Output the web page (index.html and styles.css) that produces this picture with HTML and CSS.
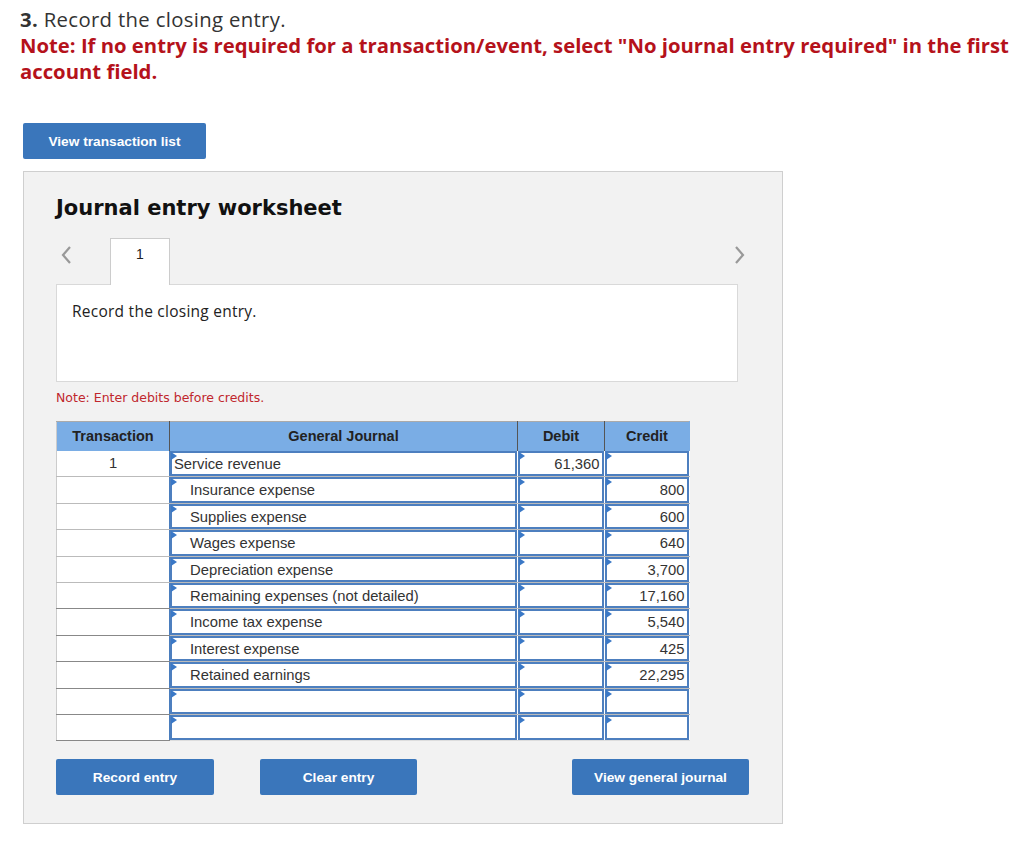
FILE: index.html
```html
<!DOCTYPE html>
<html lang="en">
<head>
    <meta charset="utf-8">
    <title>Record the closing entry</title>
    <link rel="stylesheet" href="styles.css">
</head>
<body>
    <div class="question">
        <p class="qTitle"><b>3.</b> Record the closing entry.</p>
        <p class="qNote">Note: If no entry is required for a transaction/event, select "No journal entry required" in the first account field.</p>
    </div>

    <button class="btn btnList">View transaction list</button>

    <div class="panel">
        <h2 class="panelTitle">Journal entry worksheet</h2>

        <div class="tabs">
            <span class="arrow">
                <svg width="12" height="20" viewBox="0 0 12 20"><path d="M10 2 L3 10 L10 18" fill="none" stroke="#999" stroke-width="2.2"/></svg>
            </span>
            <span class="tab">1</span>
            <span class="arrow arrowRight">
                <svg width="12" height="20" viewBox="0 0 12 20"><path d="M2 2 L9 10 L2 18" fill="none" stroke="#999" stroke-width="2.2"/></svg>
            </span>
        </div>

        <div class="desc">Record the closing entry.</div>

        <p class="hint">Note: Enter debits before credits.</p>

        <table class="journal">
            <thead>
                <tr>
                    <th class="colTx">Transaction</th>
                    <th class="colAcc">General Journal</th>
                    <th class="colDr">Debit</th>
                    <th class="colCr">Credit</th>
                </tr>
            </thead>
            <tbody>
                <tr>
                    <td class="tx">1</td>
                    <td><div class="cell">Service revenue</div></td>
                    <td><div class="cell num">61,360</div></td>
                    <td><div class="cell num"></div></td>
                </tr>
                <tr>
                    <td class="tx"></td>
                    <td><div class="cell indent">Insurance expense</div></td>
                    <td><div class="cell num"></div></td>
                    <td><div class="cell num">800</div></td>
                </tr>
                <tr>
                    <td class="tx"></td>
                    <td><div class="cell indent">Supplies expense</div></td>
                    <td><div class="cell num"></div></td>
                    <td><div class="cell num">600</div></td>
                </tr>
                <tr>
                    <td class="tx"></td>
                    <td><div class="cell indent">Wages expense</div></td>
                    <td><div class="cell num"></div></td>
                    <td><div class="cell num">640</div></td>
                </tr>
                <tr>
                    <td class="tx"></td>
                    <td><div class="cell indent">Depreciation expense</div></td>
                    <td><div class="cell num"></div></td>
                    <td><div class="cell num">3,700</div></td>
                </tr>
                <tr>
                    <td class="tx"></td>
                    <td><div class="cell indent">Remaining expenses (not detailed)</div></td>
                    <td><div class="cell num"></div></td>
                    <td><div class="cell num">17,160</div></td>
                </tr>
                <tr>
                    <td class="tx"></td>
                    <td><div class="cell indent">Income tax expense</div></td>
                    <td><div class="cell num"></div></td>
                    <td><div class="cell num">5,540</div></td>
                </tr>
                <tr>
                    <td class="tx"></td>
                    <td><div class="cell indent">Interest expense</div></td>
                    <td><div class="cell num"></div></td>
                    <td><div class="cell num">425</div></td>
                </tr>
                <tr>
                    <td class="tx"></td>
                    <td><div class="cell indent">Retained earnings</div></td>
                    <td><div class="cell num"></div></td>
                    <td><div class="cell num">22,295</div></td>
                </tr>
                <tr>
                    <td class="tx"></td>
                    <td><div class="cell"></div></td>
                    <td><div class="cell num"></div></td>
                    <td><div class="cell num"></div></td>
                </tr>
                <tr>
                    <td class="tx"></td>
                    <td><div class="cell"></div></td>
                    <td><div class="cell num"></div></td>
                    <td><div class="cell num"></div></td>
                </tr>
            </tbody>
        </table>

        <div class="actions">
            <button class="btn btnRecord">Record entry</button>
            <button class="btn btnClear">Clear entry</button>
            <button class="btn btnView">View general journal</button>
        </div>
    </div>
</body>
</html>
```

FILE: styles.css
```css
*{margin:0; padding:0; box-sizing:border-box;}
body{
    margin:0;
    padding:6px 12px 20px 20px;
    background:#fff;
    color:#333;
    font-family:"Open Sans", Lato, sans-serif;
}
.question{
    width:996px;
}
.qTitle{
    font-size:20.3px;
    letter-spacing:0.35px;
    line-height:26px;
    color:#333;
}
.qTitle b{font-weight:700;}
.qNote{
    font-size:20.3px;
    line-height:26px;
    font-weight:700;
    color:#b5121b;
}

.btn{
    display:block;
    height:36px;
    border:none;
    border-radius:2px;
    background:#3a76bb;
    color:#fff;
    font:bold 13.7px "Liberation Sans", Arial, sans-serif;
    cursor:pointer;
}
.btnList{
    width:183px;
    margin:39px 0 0 3px;
}

.panel{
    width:760px;
    margin:12px 0 0 3px;
    padding:23px 32px 28px 32px;
    background:#f2f2f2;
    border:1px solid #cfcfcf;
}
.panelTitle{
    font:bold 21px "DejaVu Sans", Verdana, sans-serif;
    color:#111;
    line-height:26px;
}
.tabs{
    display:flex;
    align-items:flex-start;
    margin-top:17px;
    width:686px;
}
.arrow{
    width:54px;
    padding:7px 0 0 4px;
}
.arrowRight{
    margin-left:auto;
    margin-right:-4px;
    width:auto;
    padding:7px 0 0 0;
}
.tab{
    width:60px;
    height:47px;
    margin-bottom:-1px;
    background:#fff;
    border:1px solid #ccc;
    border-bottom:none;
    text-align:center;
    padding-top:7px;
    font:14px "Liberation Sans", Arial, sans-serif;
    color:#222;
    position:relative;
    z-index:1;
}
.desc{
    width:682px;
    height:98px;
    background:#fff;
    border:1px solid #d9d9d9;
    padding:15px 15px;
    font-size:15.5px;
    letter-spacing:0.25px;
    color:#222;
}
.hint{
    margin-top:8px;
    font:12.5px "DejaVu Sans", Verdana, sans-serif;
    color:#c0272d;
    line-height:16px;
}

.journal{
    margin-top:15px;
    border-collapse:collapse;
    font:14.8px "Liberation Sans", Arial, sans-serif;
    background:#fff;
    border-left:1px solid #ccc;
}
.journal th{
    height:29px;
    background:#7aade5;
    color:#222;
    font-weight:bold;
    font-size:14.5px;
    border-top:1px solid #aaa;
    border-right:1px solid #555;
    text-align:center;
}
.journal th:last-child{border-right:1px solid #7aade5;}
.colTx{width:113px;}
.colAcc{width:348px;}
.colDr{width:87px;}
.colCr{width:85px;}
.journal td{
    height:26.4px;
    padding:0;
    border-bottom:1px solid #bbb;
}
.journal tbody tr:nth-child(n+6) td.tx{border-bottom-color:#888;}
.journal td.tx{
    text-align:center;
    color:#333;
    border-right:1px solid #4a7dbd;
}
.journal tbody tr:last-child td{border-bottom:1px solid #ddd;}
.cell{
    position:relative;
    height:25.4px;
    margin:0 1px 0 0;
    border:2px solid #4d7fbf;
    background:#fff;
    padding:2px 2px 0 2px;
    color:#333;
    line-height:19px;
    white-space:nowrap;
}
.cell::before{
    content:"";
    position:absolute;
    top:-1px;
    left:-1px;
    border-top:4px solid transparent;
    border-bottom:4px solid transparent;
    border-left:6px solid #3a78c6;
}
.cell.indent{padding-left:18px;}
.cell.num{text-align:right;}

.actions{
    display:flex;
    margin-top:18px;
    width:693px;
}
.btnRecord{width:158px;}
.btnClear{width:157px; margin-left:46px;}
.btnView{width:177px; margin-left:auto;}
```
